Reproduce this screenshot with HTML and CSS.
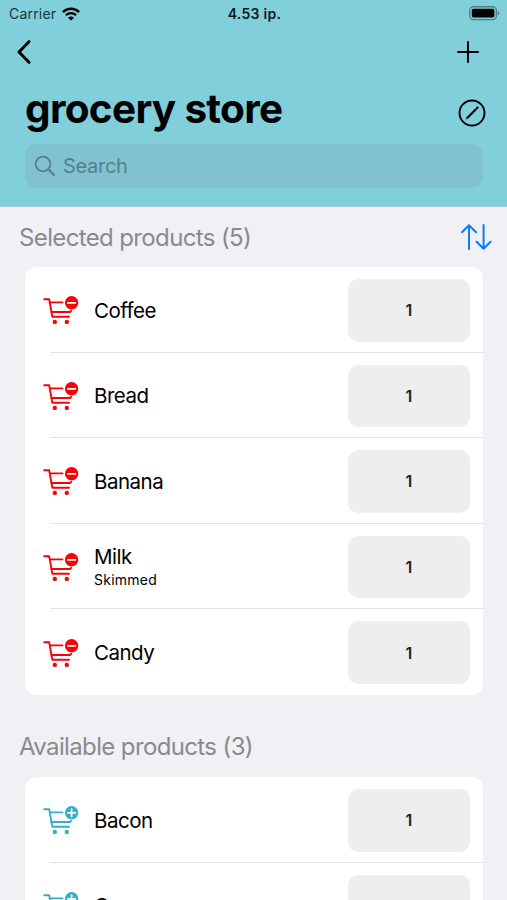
FILE: index.html
```html
<!DOCTYPE html>
<html lang="en">

<head>
    <meta charset="UTF-8">
    <meta name="viewport" content="width=device-width, initial-scale=1.0">
    <title>grocery store</title>
    <link rel="stylesheet" href="styles.css">
</head>

<body>
    <svg class="symbols" width="0" height="0">
        <symbol id="cart" viewBox="0 0 36 30">
            <g fill="none" stroke="currentColor" stroke-width="1.9" stroke-linecap="round" stroke-linejoin="round">
                <path d="M1.2 3.3H6.2L9.3 20.7H26" />
                <path d="M7.2 6.4H19.5M8.5 16H27L28.2 14.8" />
            </g>
            <circle cx="11.8" cy="25.9" r="2.2" fill="currentColor" />
            <circle cx="23.8" cy="25.9" r="2.2" fill="currentColor" />
            <circle cx="28.6" cy="6.8" r="6.7" fill="currentColor" />
        </symbol>
        <symbol id="cart-minus" viewBox="0 0 36 30">
            <use href="#cart" />
            <path d="M24.8 6.8H32.4" stroke="#fff" stroke-width="1.7" stroke-linecap="round" />
        </symbol>
        <symbol id="cart-plus" viewBox="0 0 36 30">
            <use href="#cart" />
            <path d="M24.8 6.8H32.4M28.6 3V10.6" stroke="#fff" stroke-width="1.7" stroke-linecap="round" />
        </symbol>
    </svg>

    <header class="header">
        <div class="status-bar">
            <div class="carrier">
                <span>Carrier</span>
                <svg class="wifi" viewBox="0 0 18 14">
                    <g fill="none" stroke="#000" stroke-width="2.3">
                        <path d="M0.9 5.1A11.5 11.5 0 0 1 17.1 5.1" />
                        <path d="M3.9 8.3A7.3 7.3 0 0 1 14.1 8.3" />
                    </g>
                    <path d="M9 13.6L6 10.7A4.2 4.2 0 0 1 12 10.7Z" />
                </svg>
            </div>
            <span class="time">4.53 ip.</span>
            <svg class="battery" viewBox="0 0 31 15">
                <rect x="0.8" y="0.8" width="26.6" height="12.8" rx="3.8" fill="none" stroke="#000" stroke-opacity="0.4" stroke-width="1.4" />
                <rect x="2.8" y="2.8" width="22.6" height="8.8" rx="1.8" />
                <path d="M28.8 5A2.5 2.5 0 0 1 28.8 9.4Z" fill-opacity="0.45" />
            </svg>
        </div>

        <nav class="nav-bar">
            <svg class="back" viewBox="0 0 16 26">
                <path d="M13 2.7L3 13L13 23.3" fill="none" stroke="#000" stroke-width="3" stroke-linecap="round" stroke-linejoin="round" />
            </svg>
            <svg class="add" viewBox="0 0 22 22">
                <path d="M11 1V21M1 11H21" stroke="#000" stroke-width="2" stroke-linecap="round" />
            </svg>
        </nav>

        <div class="title-row">
            <h1>grocery store</h1>
            <svg class="edit" viewBox="0 0 28 28">
                <circle cx="14" cy="14" r="12.5" fill="none" stroke="#000" stroke-width="1.9" />
                <path d="M9.2 18.9L17.9 10.2" stroke="#000" stroke-width="2.1" />
                <path d="M18.6 9.5L19.6 8.5" stroke="#000" stroke-width="2.1" stroke-linecap="round" />
                <path d="M7.7 20.4L8.5 18.2L9.9 19.6Z" />
            </svg>
        </div>

        <div class="search">
            <svg class="search-icon" viewBox="0 0 22 22">
                <circle cx="9" cy="9" r="7.4" fill="none" stroke="currentColor" stroke-width="1.8" />
                <path d="M14.4 14.4L20 20" stroke="currentColor" stroke-width="2.3" stroke-linecap="round" />
            </svg>
            <span>Search</span>
        </div>
    </header>

    <main>
        <div class="section-header">
            <h2>Selected products (5)</h2>
            <svg class="sort" viewBox="0 0 32 28">
                <path d="M9 26V2.5M2 9.2L9 2.2L16 9.2M23.6 2V25.5M16.6 18.8L23.6 25.8L30.6 18.8" fill="none" stroke="#0a7aff" stroke-width="2" stroke-linecap="round" stroke-linejoin="round" />
            </svg>
        </div>
        <ul class="list selected">
            <li class="row">
                <svg class="cart"><use href="#cart-minus" /></svg>
                <div class="product">Coffee</div>
                <div class="amount">1</div>
            </li>
            <li class="row">
                <svg class="cart"><use href="#cart-minus" /></svg>
                <div class="product">Bread</div>
                <div class="amount">1</div>
            </li>
            <li class="row">
                <svg class="cart"><use href="#cart-minus" /></svg>
                <div class="product">Banana</div>
                <div class="amount">1</div>
            </li>
            <li class="row">
                <svg class="cart"><use href="#cart-minus" /></svg>
                <div class="product">Milk<small>Skimmed</small></div>
                <div class="amount">1</div>
            </li>
            <li class="row">
                <svg class="cart"><use href="#cart-minus" /></svg>
                <div class="product">Candy</div>
                <div class="amount">1</div>
            </li>
        </ul>

        <div class="section-header available-header">
            <h2>Available products (3)</h2>
        </div>
        <ul class="list available">
            <li class="row">
                <svg class="cart"><use href="#cart-plus" /></svg>
                <div class="product">Bacon</div>
                <div class="amount">1</div>
            </li>
            <li class="row">
                <svg class="cart"><use href="#cart-plus" /></svg>
                <div class="product">Cream</div>
                <div class="amount">1</div>
            </li>
        </ul>
    </main>
</body>

</html>
```
FILE: styles.css
```css
* {
    box-sizing: border-box;
}

body {
    height: 100vh;
    margin: 0;
    overflow: hidden;
    background-color: #f1f0f5;
    font-family: Inter, sans-serif;
    color: #000;
}

svg {
    display: block;
    flex-shrink: 0;
}

.symbols {
    position: absolute;
}

.header {
    height: 207px;
    background-color: #82cfdc;
    border-bottom: 1px solid #9fcbd6;
}

.status-bar {
    display: grid;
    grid-template-columns: 1fr auto 1fr;
    align-items: center;
    height: 27px;
    padding: 0 7px 0 9px;
    font-size: 14px;
}

.carrier {
    display: flex;
    align-items: center;
    gap: 6px;
    color: #16343b;
    letter-spacing: 0.2px;
}

.wifi {
    width: 18px;
    height: 14px;
}

.time {
    font-weight: 600;
    letter-spacing: 0.3px;
    color: #0b1c20;
}

.battery {
    width: 31px;
    height: 15px;
    justify-self: end;
}

.nav-bar {
    display: flex;
    justify-content: space-between;
    align-items: center;
    height: 50px;
    padding: 0 28px 0 16px;
}

.back {
    width: 16px;
    height: 26px;
}

.add {
    width: 22px;
    height: 22px;
}

.title-row {
    display: flex;
    justify-content: space-between;
    align-items: center;
    height: 67px;
    padding: 4px 21px 0 25px;
}

h1 {
    margin: 0;
    font-size: 40.5px;
    line-height: 48px;
    font-weight: 700;
    letter-spacing: -0.7px;
    padding-bottom: 7px;
}

.edit {
    width: 28px;
    height: 28px;
}

.search {
    display: flex;
    align-items: center;
    gap: 7px;
    height: 44px;
    margin: 0 24px 0 25px;
    padding-left: 9px;
    border-radius: 11px;
    background-color: #80c2cf;
    color: #557f90;
    font-size: 20px;
    letter-spacing: -0.3px;
}

.search-icon {
    width: 22px;
    height: 22px;
}

.section-header {
    display: flex;
    justify-content: space-between;
    align-items: center;
    height: 60px;
    padding: 0 15px 0 19px;
}

.available-header {
    height: 82px;
    padding-top: 22px;
}

h2 {
    margin: 0;
    font-size: 24px;
    font-weight: 400;
    letter-spacing: -0.63px;
    color: #8a8a8e;
}

.sort {
    width: 32px;
    height: 28px;
}

.list {
    margin: 0 24px 0 25px;
    padding: 0;
    list-style: none;
    border-radius: 12px;
    background-color: #fff;
    overflow: hidden;
}

.row {
    display: flex;
    align-items: center;
    height: 85.6px;
    margin-left: 25px;
    padding: 2px 13px 0 0;
    border-bottom: 1px solid #e3e3e5;
}

.row:last-child {
    padding-top: 1px;
    border-bottom: none;
}

.cart {
    width: 36px;
    height: 30px;
    margin: 2px 15px 0 -7px;
}

.selected .cart {
    color: #fb0007;
}

.available .cart {
    color: #38adc7;
}

.product {
    flex: 1;
    font-size: 20.5px;
    line-height: 25px;
    letter-spacing: -0.5px;
}

.product small {
    display: block;
    font-size: 14px;
    line-height: 22px;
    letter-spacing: 0.25px;
}

.amount {
    display: flex;
    justify-content: center;
    align-items: center;
    width: 122px;
    height: 62.5px;
    border-radius: 10px;
    background-color: #eee;
    font-size: 16px;
    font-weight: 600;
    color: #222;
}
```
